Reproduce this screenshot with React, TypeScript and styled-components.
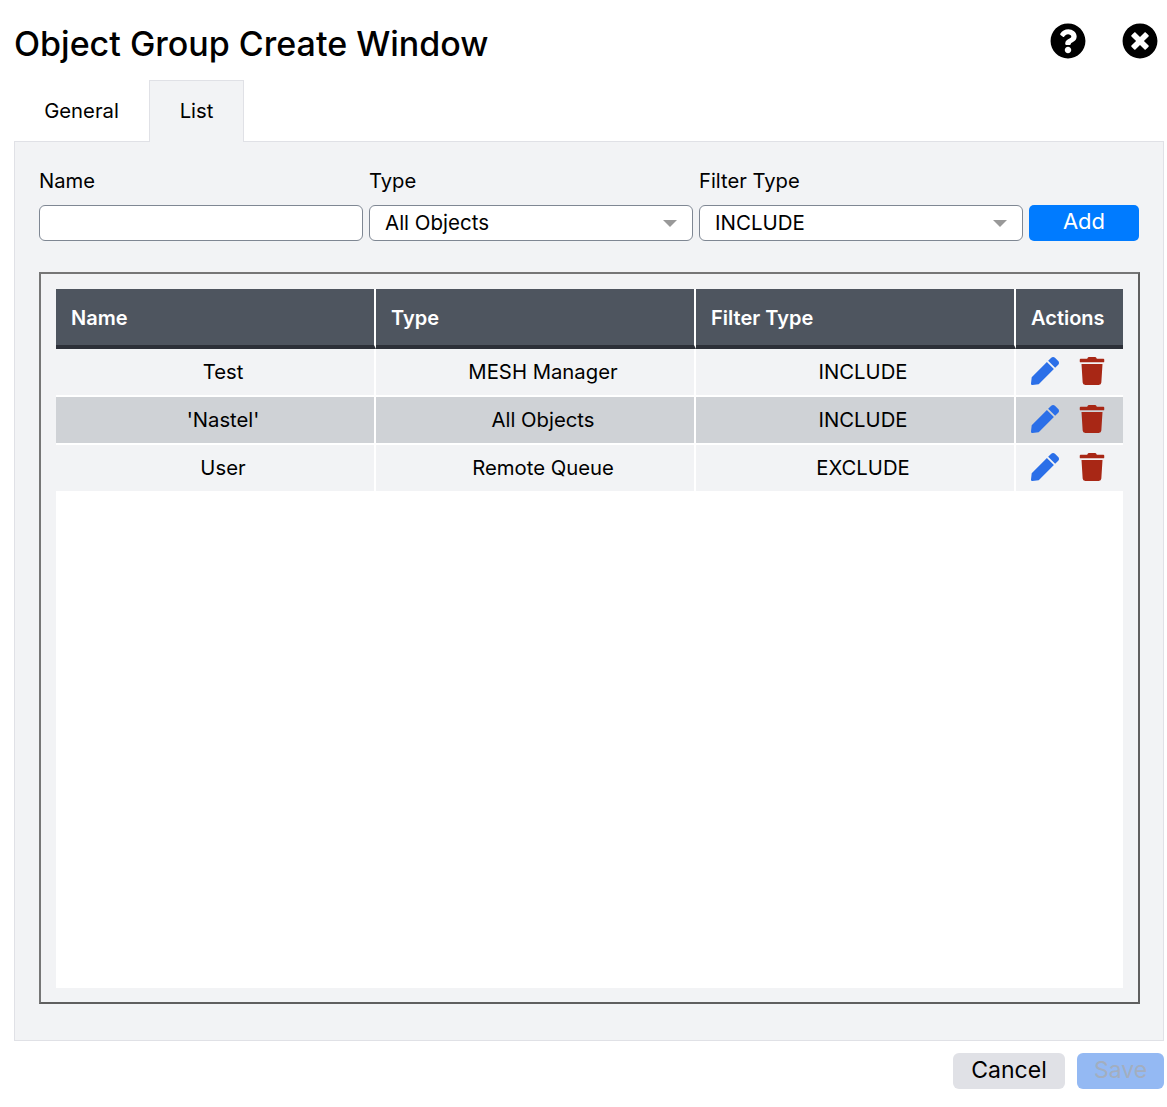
import React from "react";
import styled, { createGlobalStyle } from "styled-components";
import { FaQuestionCircle, FaTimesCircle, FaPen, FaTrash } from "react-icons/fa";

const Global = createGlobalStyle`
  html, body { margin: 0; padding: 0; background: #fff; }
  body { font-family: Inter, Lato, sans-serif; color: #000; }
  * { box-sizing: border-box; }
`;
const Page = styled.div`
  width: 1167px; height: 1107px; padding: 0 3px 0 14px; display: flex; flex-direction: column;
`;
const Header = styled.header`
  height: 80px; display: flex; align-items: flex-start; justify-content: space-between; padding: 22px 6px 0 0;
`;
const Title = styled.h1`
  margin: 0; font-size: 34px; line-height: 44px; font-weight: 500; letter-spacing: 0;
`;
const HeaderIcons = styled.div`
  display: flex; gap: 36px; font-size: 36px; line-height: 0; padding-top: 1px;
`;
const Tabs = styled.nav`
  display: flex; height: 62px; margin-bottom: -1px; position: relative; z-index: 1;
`;
const Tab = styled.div<{ $active?: boolean }>`
  display: flex; align-items: center; justify-content: center; font-size: 20.3px; height: 62px; padding-bottom: 2px;
  width: ${p => (p.$active ? "95px" : "135px")};
  background: ${p => (p.$active ? "#f2f3f5" : "transparent")};
  border: 1px solid ${p => (p.$active ? "#e0e1e6" : "transparent")};
  border-bottom: none;
`;
const Panel = styled.section`
  height: 900px; background: #f2f3f5; border: 1px solid #e0e1e6; padding: 25px 23px 36px 24px;
  display: flex; flex-direction: column;
`;
const FormRow = styled.div`
  display: grid; grid-template-columns: 324px 324px 324px 110px; column-gap: 6px; align-items: end; height: 74px;
`;
const Field = styled.div`
  display: flex; flex-direction: column; gap: 11px;
`;
const Label = styled.label`
  font-size: 20.2px; line-height: 27px;
`;
const TextInput = styled.input`
  height: 36px; width: 100%; border: 1px solid #7f8793; border-radius: 6px; background: #fff; outline: none; padding: 0 15px;
`;
const SelectBox = styled.div`
  height: 36px; border: 1px solid #7f8793; border-radius: 6px; background: #fff; padding: 0 0 2px 15px;
  display: flex; align-items: center; justify-content: space-between; font-size: 20.5px;
`;
const Caret = styled.span`
  width: 0; height: 0; border-left: 7px solid transparent; border-right: 7px solid transparent;
  border-top: 7px solid #999; margin: 2px 15px 0 0;
`;
const AddButton = styled.button`
  height: 36px; border: none; border-radius: 5px; background: #007bff; color: #fff; font: inherit; font-size: 22px; padding: 0 0 4px;
`;
const Fieldset = styled.div`
  margin-top: 31px; height: 732px; border: 2px solid; border-color: #767676 #5f5f5f #5f5f5f #767676; padding: 15px;
`;
const TableArea = styled.div`
  height: 699px; background: #fff;
`;
const Table = styled.table`
  width: 1067px; border-collapse: separate; border-spacing: 0; table-layout: fixed;
`;
const Th = styled.th<{ $w: number }>`
  width: ${p => p.$w}px; height: 60px; background: #4e555f; color: #fff; font-size: 20px; font-weight: 600;
  text-align: left; padding: 2px 0 0 15px; border-bottom: 4px solid #2c3038; border-right: 2px solid #fff;
  &:last-child { border-right: none; }
`;
const Tr = styled.tr<{ $alt?: boolean }>`
  height: 48px; background: ${p => (p.$alt ? "#cfd2d6" : "#f2f3f5")};
`;
const Td = styled.td`
  text-align: center; font-size: 20.3px; padding: 0 0 1px 16px; border-right: 2px solid #fff; border-bottom: 2px solid #fff;
  &:last-child { border-right: none; padding: 0 0 2px; }
`;
const Actions = styled.div`
  display: flex; align-items: center; gap: 19px; padding-left: 15px; height: 100%;
`;
const Footer = styled.footer`
  display: flex; justify-content: flex-end; gap: 12px; margin-top: 12px;
`;
const FootButton = styled.button<{ $primary?: boolean }>`
  height: 36px; border: none; border-radius: 6px; font: inherit; font-size: 23px; padding: 0 0 2px;
  width: ${p => (p.$primary ? "87px" : "112px")};
  background: ${p => (p.$primary ? "#94b9f3" : "#e0e1e6")};
  color: ${p => (p.$primary ? "#a3aebf" : "#000")};
`;

const rows = [
  ["Test", "MESH Manager", "INCLUDE"],
  ["'Nastel'", "All Objects", "INCLUDE"],
  ["User", "Remote Queue", "EXCLUDE"],
];

export default function App() {
  return (
    <Page>
      <Global />
      <Header>
        <Title>Object Group Create Window</Title>
        <HeaderIcons>
          <FaQuestionCircle />
          <FaTimesCircle />
        </HeaderIcons>
      </Header>
      <Tabs>
        <Tab>General</Tab>
        <Tab $active>List</Tab>
      </Tabs>
      <Panel>
        <FormRow>
          <Field><Label>Name</Label><TextInput /></Field>
          <Field><Label>Type</Label><SelectBox>All Objects<Caret /></SelectBox></Field>
          <Field><Label>Filter Type</Label><SelectBox>INCLUDE<Caret /></SelectBox></Field>
          <AddButton>Add</AddButton>
        </FormRow>
        <Fieldset>
          <TableArea>
            <Table>
              <thead>
                <tr>
                  <Th $w={320}>Name</Th>
                  <Th $w={320}>Type</Th>
                  <Th $w={320}>Filter Type</Th>
                  <Th $w={107}>Actions</Th>
                </tr>
              </thead>
              <tbody>
                {rows.map((r, i) => (
                  <Tr key={i} $alt={i === 1}>
                    {r.map(c => <Td key={c}>{c}</Td>)}
                    <Td>
                      <Actions>
                        <FaPen size={28} color="#2b6fe8" />
                        <FaTrash size={28} color="#a82715" />
                      </Actions>
                    </Td>
                  </Tr>
                ))}
              </tbody>
            </Table>
          </TableArea>
        </Fieldset>
      </Panel>
      <Footer>
        <FootButton>Cancel</FootButton>
        <FootButton $primary>Save</FootButton>
      </Footer>
    </Page>
  );
}
